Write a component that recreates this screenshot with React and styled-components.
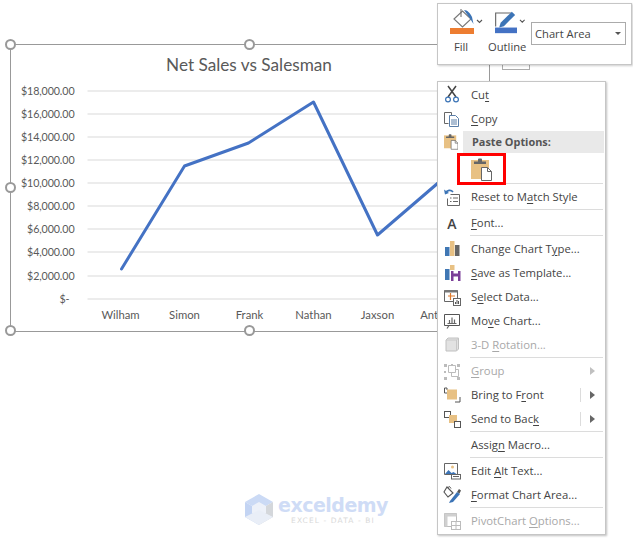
import React from 'react';
import styled, { createGlobalStyle } from 'styled-components';

const Global = createGlobalStyle`
  html, body { margin: 0; padding: 0; background: #fff; }
  body { font-family: "Open Sans", "Liberation Sans", sans-serif; }
`;

const Page = styled.div`
  position: relative;
  width: 633px;
  height: 541px;
  overflow: hidden;
  padding: 44px 0 0 10px;
  box-sizing: border-box;
`;

const ChartFrame = styled.div`
  position: relative;
  width: 480px;
  height: 288px;
  box-sizing: border-box;
  border: 1.5px solid #999;
  color: #595959;
  font-family: Lato, "Liberation Sans", sans-serif;
`;

const ChartTitle = styled.div`
  height: 31px;
  padding: 8px 2px 0 0;
  box-sizing: border-box;
  text-align: center;
  font-size: 17.2px;
  line-height: 23px;
  color: #595959;
`;

const Handle = styled.span`
  position: absolute;
  left: ${p => p.$x};
  top: ${p => p.$y};
  width: 11px;
  height: 11px;
  margin: -6px 0 0 -6px;
  box-sizing: border-box;
  border: 2px solid #999;
  border-radius: 50%;
  background: #fff;
`;

const Plot = styled.svg`
  display: block;
  font-size: 11.3px;
  fill: #595959;
`;

const AxisValue = styled.text`
  font-size: 10.7px;
  letter-spacing: -0.1px;
`;

const Watermark = styled.div`
  display: flex;
  align-items: flex-start;
  gap: 5px;
  margin: 162px 0 0 235px;
  width: 150px;
`;

const MarkText = styled.div`
  display: flex;
  flex-direction: column;
  align-items: center;
  padding-top: 1px;
`;

const MarkName = styled.span`
  font-family: "DejaVu Sans", sans-serif;
  font-weight: 700;
  font-size: 19px;
  line-height: 21px;
  letter-spacing: -0.5px;
  color: #cfdcf6;
`;

const MarkTag = styled.span`
  font-family: "DejaVu Sans", sans-serif;
  font-size: 7.5px;
  line-height: 9px;
  letter-spacing: 1.1px;
  color: #d9d9d9;
`;

const HintBox = styled.div`
  position: absolute;
  left: 502px;
  top: 50px;
  width: 28px;
  height: 20px;
  box-sizing: border-box;
  border: 1px solid #ababab;
  background: #fff;
`;

const Toolbar = styled.div`
  position: absolute;
  left: 437px;
  top: 3px;
  width: 195px;
  height: 62px;
  box-sizing: border-box;
  display: flex;
  align-items: flex-start;
  padding: 4px 0 0 8px;
  background: #fff;
  border: 1px solid #c6c6c6;
  box-shadow: 1px 1px 2px rgba(0, 0, 0, 0.2);
  font-size: 11.2px;
  color: #444;
`;

const ToolButton = styled.div`
  flex: none;
  width: ${p => p.$w}px;
  display: flex;
  flex-direction: column;
`;

const ToolIconRow = styled.div`
  display: flex;
  align-items: flex-start;
  gap: 2px;
  height: 27px;
  padding-left: ${p => p.$pad}px;
`;

const ToolLabel = styled.span`
  width: ${p => p.$w}px;
  margin-top: 4px;
  line-height: 16px;
  text-align: center;
`;

const SelectBox = styled.div`
  width: 95px;
  height: 23px;
  margin: 14px 0 0 5px;
  box-sizing: border-box;
  display: flex;
  align-items: center;
  justify-content: space-between;
  padding: 0 4px 1px 3px;
  border: 1px solid #ababab;
`;

const Caret = styled.span`
  width: 0;
  height: 0;
  border: 3px solid transparent;
  border-top: 3px solid #555;
  margin-top: 3px;
`;

const Menu = styled.div`
  position: absolute;
  left: 437px;
  top: 81px;
  width: 169px;
  box-sizing: border-box;
  padding: 1px;
  background: #fff;
  border: 1px solid #c6c6c6;
  box-shadow: 1px 1px 2px rgba(0, 0, 0, 0.25);
  font-size: 11.3px;
`;

const Row = styled.div`
  display: flex;
  align-items: center;
  height: ${p => p.$h || 24}px;
  color: ${p => (p.$off ? '#a8a8a8' : '#444')};
  u { text-underline-offset: 2px; text-decoration-thickness: 1px; }
`;

const IconSlot = styled.span`
  flex: none;
  width: ${p => p.$w || 26}px;
  height: 20px;
  display: flex;
  justify-content: center;
  align-items: center;
`;

const Label = styled.span`
  flex: 1;
  padding: 0 0 2px 6px;
  white-space: nowrap;
`;

const Header = styled.div`
  flex: 1;
  height: 100%;
  display: flex;
  align-items: center;
  padding: 0 0 2px 9px;
  box-sizing: border-box;
  background: #e9e9e9;
  font-size: 10.9px;
  font-weight: 700;
  color: #555;
`;

const Sep = styled.div`
  height: 1px;
  margin: 0 1px 1px 31px;
  background: #dcdcdc;
`;

const PasteChoice = styled.div`
  width: 49px;
  height: 32px;
  margin: 2px 0 0 18px;
  box-sizing: border-box;
  border: 3px solid #f00;
  display: flex;
  align-items: center;
  justify-content: center;
`;

const SubArrow = styled.span`
  flex: none;
  width: 15px;
  height: 14px;
  margin-right: 9px;
  box-sizing: border-box;
  border-left: 1px solid ${p => (p.$off ? 'transparent' : '#dcdcdc')};
  display: flex;
  align-items: center;
  justify-content: flex-end;
  &::after {
    content: '';
    width: 0;
    height: 0;
    border: 4px solid transparent;
    border-left: 5px solid ${p => (p.$off ? '#c0c0c0' : '#666')};
    border-right: 0;
  }
`;

const FontGlyph = styled.span`
  font-size: 14px;
  font-weight: 600;
  color: #444;
`;

const Ico = ({ children, w = 20, h = 20 }) => (
  <svg width={w} height={h} viewBox={`0 0 ${w} ${h}`} fill="none">{children}</svg>
);

const Clip = ({ s = 1 }) => (
  <svg width={21 * s} height={23 * s} viewBox="0 0 21 23" fill="none">
    <rect x="0" y="2" width="18" height="19" fill="#e8c184" />
    <path d="M3 6V3.500h4V1.500q0-1 1-1h2q1 0 1 1v2h4V6z" fill="#666" />
    <path d="M10.500 9.500h6l4 4v9h-10z" fill="#fff" stroke="#666" />
    <path d="M16.500 9.500v4h4" stroke="#666" />
  </svg>
);

const icons = {
  cut: (
    <Ico>
      <path d="M6 1l8 11M14 1L6 12" stroke="#444" strokeWidth="1.500" />
      <circle cx="6" cy="14.500" r="2.400" stroke="#3c74b6" strokeWidth="1.200" />
      <circle cx="14" cy="14.500" r="2.400" stroke="#3c74b6" strokeWidth="1.200" />
    </Ico>
  ),
  copy: (
    <Ico>
      <path d="M2.500 3.500h7v3M2.500 3.500v11h4" stroke="#666" />
      <path d="M7.500 6.500h6l3 3v8h-9z" fill="#fff" stroke="#5a7ea8" />
      <path d="M9 11h6M9 13h6M9 15h6" stroke="#5a7ea8" />
    </Ico>
  ),
  reset: (
    <Ico>
      <path d="M3.500 6C5 3 9 2.500 11 5" stroke="#3c74b6" strokeWidth="1.700" />
      <path d="M2 2.500l1 5 4-1.500z" fill="#3c74b6" />
      <path d="M8.500 7.500h9v11h-12v-7" stroke="#666" />
      <path d="M8 11h1.500M8 14.500h1.500M11 11h5M11 14.500h5" stroke="#666" />
    </Ico>
  ),
  type: (
    <Ico>
      <rect x="3" y="8" width="4.500" height="9" fill="#4077b4" />
      <rect x="8" y="2" width="4.500" height="15" fill="#e8c184" />
      <rect x="13" y="6" width="4.500" height="11" fill="#666" />
    </Ico>
  ),
  template: (
    <Ico>
      <rect x="3" y="6" width="4.500" height="11" fill="#4077b4" />
      <rect x="8" y="2" width="4.500" height="5" fill="#e8c184" />
      <path d="M9 8h9.500v10H9z" fill="#7b3f98" />
      <rect x="11.500" y="8" width="4.500" height="2.500" fill="#fff" />
      <rect x="11.500" y="13.500" width="4.500" height="4.500" fill="#fff" />
    </Ico>
  ),
  data: (
    <Ico>
      <path d="M2.500 3.500h13v11h-13z" stroke="#666" />
      <path d="M2.500 3h13v2.500h-13z" fill="#777" />
      <path d="M6 9h7M8.500 6v7" stroke="#e07b2c" strokeWidth="1.200" />
      <rect x="11.500" y="11.500" width="7" height="7" fill="#fff" stroke="#666" />
      <path d="M13.500 17v-2M15 17v-4M16.500 17v-3" stroke="#555" />
    </Ico>
  ),
  move: (
    <Ico>
      <path d="M2.500 3.500h15v11h-15z" stroke="#555" />
      <path d="M5 17.500l2-3M7.500 12.500v-3.500M10 12.500v-6M12.500 12.500v-4M5.500 12.500h9" stroke="#666" strokeWidth="1.200" />
    </Ico>
  ),
  cube: (
    <Ico>
      <path d="M4 5l2-2h10.500v11l-2 2H4z" fill="#e2e2e2" stroke="#c0c0c0" />
      <path d="M4 5h10.500v11M14.500 5l2-2" stroke="#c8c8c8" />
    </Ico>
  ),
  group: (
    <Ico>
      <path d="M6.500 4.500h7v7h-7zM9.500 11.500v4h7v-7h-3" stroke="#bcbcbc" />
      <path d="M2 3h3v3H2zM15 3h3v3h-3zM2 16h3v3H2zM15 16h3v3h-3zM9 3h2v2H9zM2 10h2v2H2z" fill="#bcbcbc" />
    </Ico>
  ),
  front: (
    <Ico>
      <path d="M5 5V3H2.500v5H5M13 17h5v-5" stroke="#555" />
      <rect x="5" y="4.500" width="10" height="10" fill="#e8c184" />
    </Ico>
  ),
  back: (
    <Ico>
      <rect x="2.500" y="2.500" width="6" height="6" fill="#fff" stroke="#555" />
      <rect x="7" y="6" width="8" height="8" fill="#e8c184" />
      <rect x="12.500" y="12.500" width="6" height="6" fill="#fff" stroke="#555" />
    </Ico>
  ),
  alt: (
    <Ico>
      <path d="M2.500 2.500h13v11h-13z" stroke="#666" />
      <circle cx="10.500" cy="6" r="1.500" fill="#e8c184" />
      <path d="M3 13l3.500-4 3 3 2-1 3 2z" fill="#3c74b6" />
      <rect x="9.500" y="13.500" width="9" height="4.500" fill="#fff" stroke="#666" />
      <path d="M11 15.500h6" stroke="#666" />
    </Ico>
  ),
  format: (
    <Ico>
      <path d="M5 2l6 6-5 4-4-5z" fill="#fff" stroke="#555" strokeWidth="1.100" />
      <path d="M6 2.500l1.500-1 1.500 2" stroke="#555" />
      <path d="M8 16l7-9 3 2-7 8-4 1z" fill="#3c74b6" />
      <path d="M15 7l2-3 2 1.500-1.500 3z" fill="#555" />
    </Ico>
  ),
  pivot: (
    <Ico>
      <path d="M2.500 2.500h12v13h-12z" stroke="#bcbcbc" />
      <path d="M2.500 2.500h12v3h-12zM2.500 2.500h3v13h-3z" fill="#d0d0d0" />
      <rect x="9.500" y="10.500" width="9" height="8" fill="#fff" stroke="#bcbcbc" />
      <path d="M10 14.500h8M14 11v7" stroke="#bcbcbc" />
    </Ico>
  ),
};

const Chevron = () => (
  <svg width="7" height="20" viewBox="0 0 7 20">
    <path d="M1 12l2.500 2.500L6 12" fill="none" stroke="#555" strokeWidth="1.100" />
  </svg>
);

const Item = ({ icon, off, sub, children }) => (
  <Row $off={off}>
    <IconSlot>{icon}</IconSlot>
    <Label>{children}</Label>
    {sub && <SubArrow $off={off} />}
  </Row>
);

const ticks = [
  ['$18,000.00', 92], ['$16,000.00', 115], ['$14,000.00', 138], ['$12,000.00', 161],
  ['$10,000.00', 184], ['$8,000.00', 207], ['$6,000.00', 230], ['$4,000.00', 253],
  ['$2,000.00', 277],
];
const names = [['Wilham', 121], ['Simon', 185], ['Frank', 250], ['Nathan', 314], ['Jaxson', 378], ['Anthony', 442]];
const sales = '122,270 185,167 249,144 314,103 378,236 442,181 480,150';

export default function App() {
  return (
    <Page>
      <Global />
      <ChartFrame>
        <ChartTitle>Net Sales vs Salesman</ChartTitle>
        <Plot width="477" height="253" viewBox="11.5 77 477 253">
          {ticks.map(([t, y]) => (
            <g key={t}>
              <line x1="88" x2="488" y1={y} y2={y} stroke="#d9d9d9" />
              <AxisValue x="75" y={y + 4} textAnchor="end">{t}</AxisValue>
            </g>
          ))}
          <line x1="88" x2="488" y1="300" y2="300" stroke="#d9d9d9" />
          <AxisValue x="70" y="304" textAnchor="end">$-</AxisValue>
          {names.map(([n, x]) => (
            <text key={n} x={x} y="320" textAnchor="middle">{n}</text>
          ))}
          <polyline points={sales} fill="none" stroke="#4472c4" strokeWidth="3" strokeLinecap="round" strokeLinejoin="round" />
        </Plot>
        <Handle $x="0" $y="0" />
        <Handle $x="50%" $y="0" />
        <Handle $x="0" $y="50%" />
        <Handle $x="0" $y="100%" />
        <Handle $x="50%" $y="100%" />
      </ChartFrame>

      <Watermark>
        <svg width="28" height="31" viewBox="0 0 28 31">
          <path d="M14 0L28 8 14 16 0 8z" fill="#cbdaf5" />
          <path d="M0 8l14 8v15L0 23z" fill="#c3d4f3" />
          <path d="M28 8L14 16v15l14-8z" fill="#d4d7db" />
          <path d="M14 8l7 4v7l-7 4-7-4v-7z" fill="#edf1f9" />
          <path d="M14 31L0 23l14-7 14 7z" fill="#e9eef7" />
        </svg>
        <MarkText>
          <MarkName>exceldemy</MarkName>
          <MarkTag>EXCEL - DATA - BI</MarkTag>
        </MarkText>
      </Watermark>

      <HintBox />

      <Toolbar>
        <ToolButton $w={42}>
          <ToolIconRow $pad={4}>
            <svg width="24" height="26" viewBox="0 0 24 26">
              <path d="M4 11l8.500-8L21 11l-8.500 8z" fill="#fff" stroke="#777" strokeWidth="1.100" />
              <path d="M14 2c3.500 0 6.500 3.500 8 7l1.500 7-3.500-5.500z" fill="#3c74b6" />
              <path d="M11 1v8" stroke="#666" />
              <rect x="0" y="20" width="24" height="6" fill="#ed7d31" />
            </svg>
            <Chevron />
          </ToolIconRow>
          <ToolLabel $w={30}>Fill</ToolLabel>
        </ToolButton>
        <ToolButton $w={38}>
          <ToolIconRow $pad={7}>
            <svg width="24" height="26" viewBox="0 0 24 26">
              <path d="M17 4.500H.7V19" fill="none" stroke="#666" strokeWidth="1.200" />
              <path d="M6 15L18 3l3.500 3.500-12 12-5 1.500z" fill="#3c74b6" />
              <rect x="0" y="20" width="24" height="6" fill="#4472c4" />
            </svg>
            <Chevron />
          </ToolIconRow>
          <ToolLabel $w={38}>Outline</ToolLabel>
        </ToolButton>
        <SelectBox>
          Chart Area
          <Caret />
        </SelectBox>
      </Toolbar>

      <Menu>
        <Item icon={icons.cut}>Cu<u>t</u></Item>
        <Item icon={icons.copy}><u>C</u>opy</Item>
        <Row $h={22}>
          <IconSlot $w={24}><Clip s={0.68} /></IconSlot>
          <Header>Paste Options:</Header>
        </Row>
        <Row $h={30}>
          <PasteChoice><Clip /></PasteChoice>
        </Row>
        <Sep />
        <Item icon={icons.reset}>Reset to M<u>a</u>tch Style</Item>
        <Sep />
        <Item icon={<FontGlyph>A</FontGlyph>}><u>F</u>ont...</Item>
        <Sep />
        <Item icon={icons.type}>Change Chart T<u>y</u>pe...</Item>
        <Item icon={icons.template}><u>S</u>ave as Template...</Item>
        <Item icon={icons.data}>S<u>e</u>lect Data...</Item>
        <Item icon={icons.move}>Mo<u>v</u>e Chart...</Item>
        <Item icon={icons.cube} off>3-D <u>R</u>otation...</Item>
        <Sep />
        <Item icon={icons.group} off sub><u>G</u>roup</Item>
        <Item icon={icons.front} sub>Bring to F<u>r</u>ont</Item>
        <Item icon={icons.back} sub>Send to Bac<u>k</u></Item>
        <Sep />
        <Item>Assig<u>n</u> Macro...</Item>
        <Sep />
        <Item icon={icons.alt}>Edit <u>A</u>lt Text...</Item>
        <Item icon={icons.format}><u>F</u>ormat Chart Area...</Item>
        <Sep />
        <Item icon={icons.pivot} off>PivotChart <u>O</u>ptions...</Item>
      </Menu>
    </Page>
  );
}
